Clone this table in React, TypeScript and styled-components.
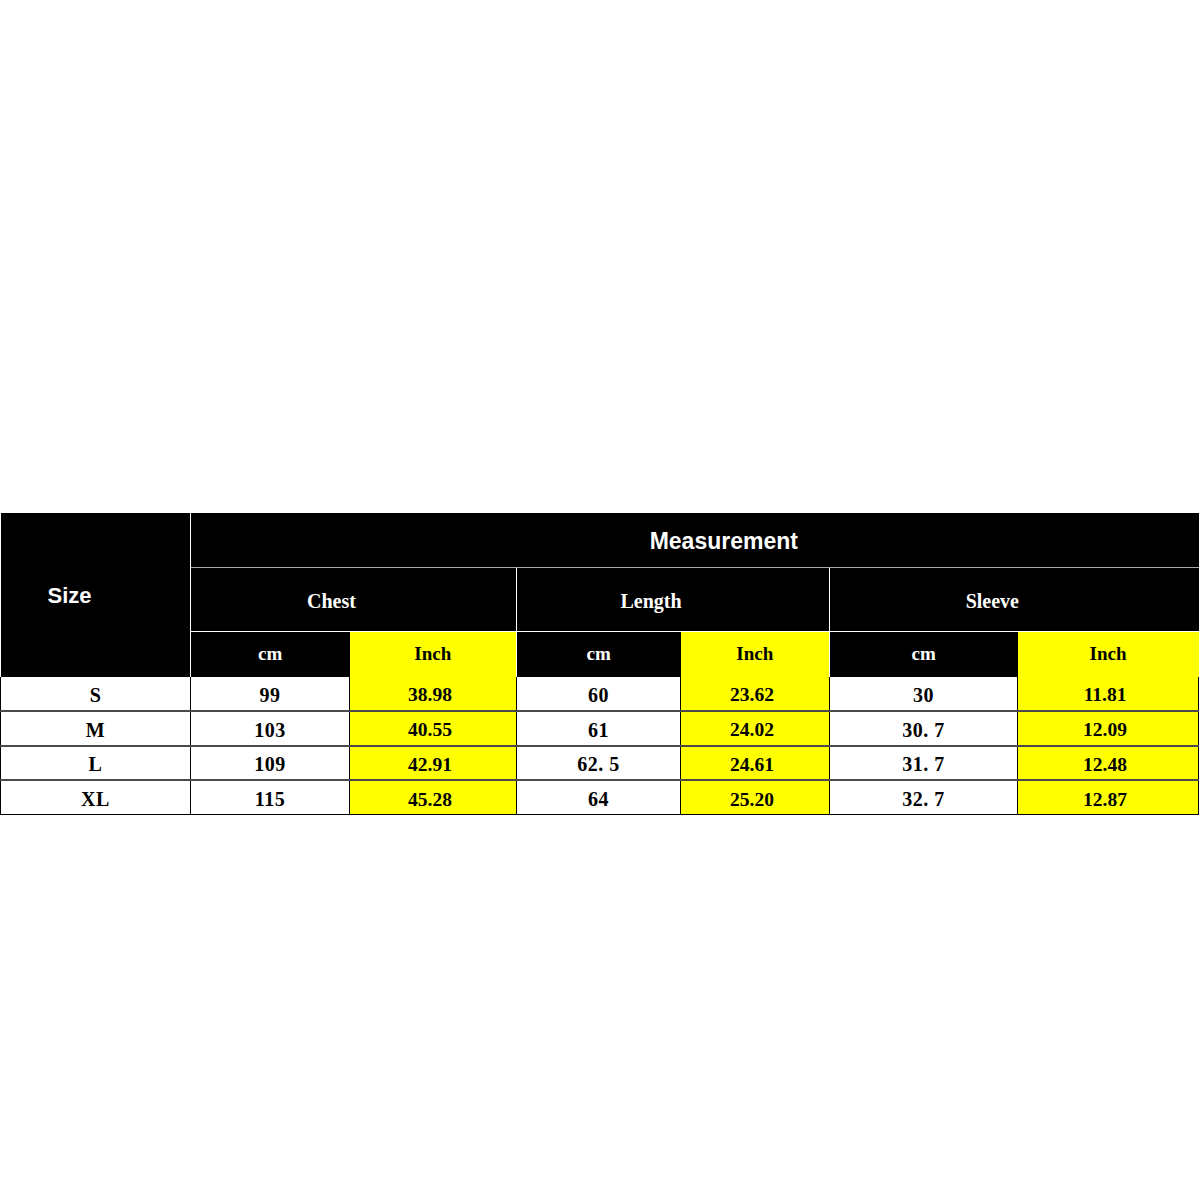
import React from 'react';
import styled, { createGlobalStyle } from 'styled-components';

const GlobalStyle = createGlobalStyle`
  html, body {
    margin: 0;
    padding: 0;
    background: #ffffff;
  }
`;

const Page = styled.main`
  width: 1200px;
  min-height: 1200px;
  padding-top: 513px;
  box-sizing: border-box;
`;

const Table = styled.table`
  width: 1199px;
  border-collapse: collapse;
  table-layout: fixed;
  font-family: 'Liberation Serif', 'Times New Roman', serif;
`;

const Col = styled.col<{ $w: number }>`
  width: ${(p) => p.$w}px;
`;

const SizeHead = styled.th`
  background: #000;
  color: #fff;
  font-family: 'Liberation Sans', Arial, sans-serif;
  font-size: 22px;
  font-weight: bold;
  text-align: left;
  padding: 2px 0 0 47px;
  border-right: 1px solid #fff;
  vertical-align: middle;
`;

const TitleHead = styled.th`
  background: #000;
  color: #fff;
  height: 54px;
  padding: 4px 0 0 58px;
  box-sizing: border-box;
  font-family: 'Liberation Sans', Arial, sans-serif;
  font-size: 23px;
  font-weight: bold;
  border-bottom: 1px solid #a8a8a8;
`;

const GroupHead = styled.th<{ $last?: boolean }>`
  background: #000;
  color: #fff;
  height: 64px;
  padding: 4px 44px 0 0;
  box-sizing: border-box;
  font-size: 20px;
  font-weight: bold;
  border-right: ${(p) => (p.$last ? 'none' : '1px solid #fff')};
  border-bottom: 1px solid #fff;
`;

const UnitHead = styled.th<{ $inch?: boolean; $edge?: boolean }>`
  background: ${(p) => (p.$inch ? '#ffff00' : '#000')};
  color: ${(p) => (p.$inch ? '#000' : '#fff')};
  height: 45px;
  padding: 0;
  font-size: 19px;
  font-weight: bold;
  border-right: ${(p) => (p.$edge ? '1px solid #fff' : 'none')};
`;

const Row = styled.tr`
  height: 34.5px;
  border-bottom: 2px solid #4a4a4a;

  &:last-child {
    border-bottom: 1px solid #000;
  }
`;

const Cell = styled.td<{ $inch?: boolean; $first?: boolean }>`
  background: ${(p) => (p.$inch ? '#ffff00' : '#fff')};
  color: #000;
  padding: 4px ${(p) => (p.$inch ? '6px' : '0')} 0 0;
  text-align: center;
  white-space: pre;
  font-size: ${(p) => (p.$inch ? '19.5px' : '20px')};
  font-weight: bold;
  border-right: 1px solid #000;
  border-left: ${(p) => (p.$first ? '1px solid #000' : 'none')};
  letter-spacing: ${(p) => (p.$inch ? '0' : '0.5px')};
`;

const widths = [190, 159, 167, 164, 149, 188, 181];

const groups = ['Chest', 'Length', 'Sleeve'];

const rows = [
  { size: 'S', values: ['99', '38.98', '60', '23.62', '30', '11.81'] },
  { size: 'M', values: ['103', '40.55', '61', '24.02', '30. 7', '12.09'] },
  { size: 'L', values: ['109', '42.91', '62. 5', '24.61', '31. 7', '12.48'] },
  { size: 'XL', values: ['115', '45.28', '64', '25.20', '32. 7', '12.87'] },
];

export default function App() {
  return (
    <Page>
      <GlobalStyle />
      <Table>
        <colgroup>
          {widths.map((w, i) => (
            <Col key={i} $w={w} />
          ))}
        </colgroup>
        <thead>
          <tr>
            <SizeHead rowSpan={3}>Size</SizeHead>
            <TitleHead colSpan={6}>Measurement</TitleHead>
          </tr>
          <tr>
            {groups.map((g, i) => (
              <GroupHead key={g} colSpan={2} $last={i === groups.length - 1}>
                {g}
              </GroupHead>
            ))}
          </tr>
          <tr>
            {groups.map((g, i) => (
              <React.Fragment key={g}>
                <UnitHead>cm</UnitHead>
                <UnitHead $inch $edge={i < groups.length - 1}>Inch</UnitHead>
              </React.Fragment>
            ))}
          </tr>
        </thead>
        <tbody>
          {rows.map((r) => (
            <Row key={r.size}>
              <Cell $first>{r.size}</Cell>
              {r.values.map((v, i) => (
                <Cell key={i} $inch={i % 2 === 1}>
                  {v}
                </Cell>
              ))}
            </Row>
          ))}
        </tbody>
      </Table>
    </Page>
  );
}
